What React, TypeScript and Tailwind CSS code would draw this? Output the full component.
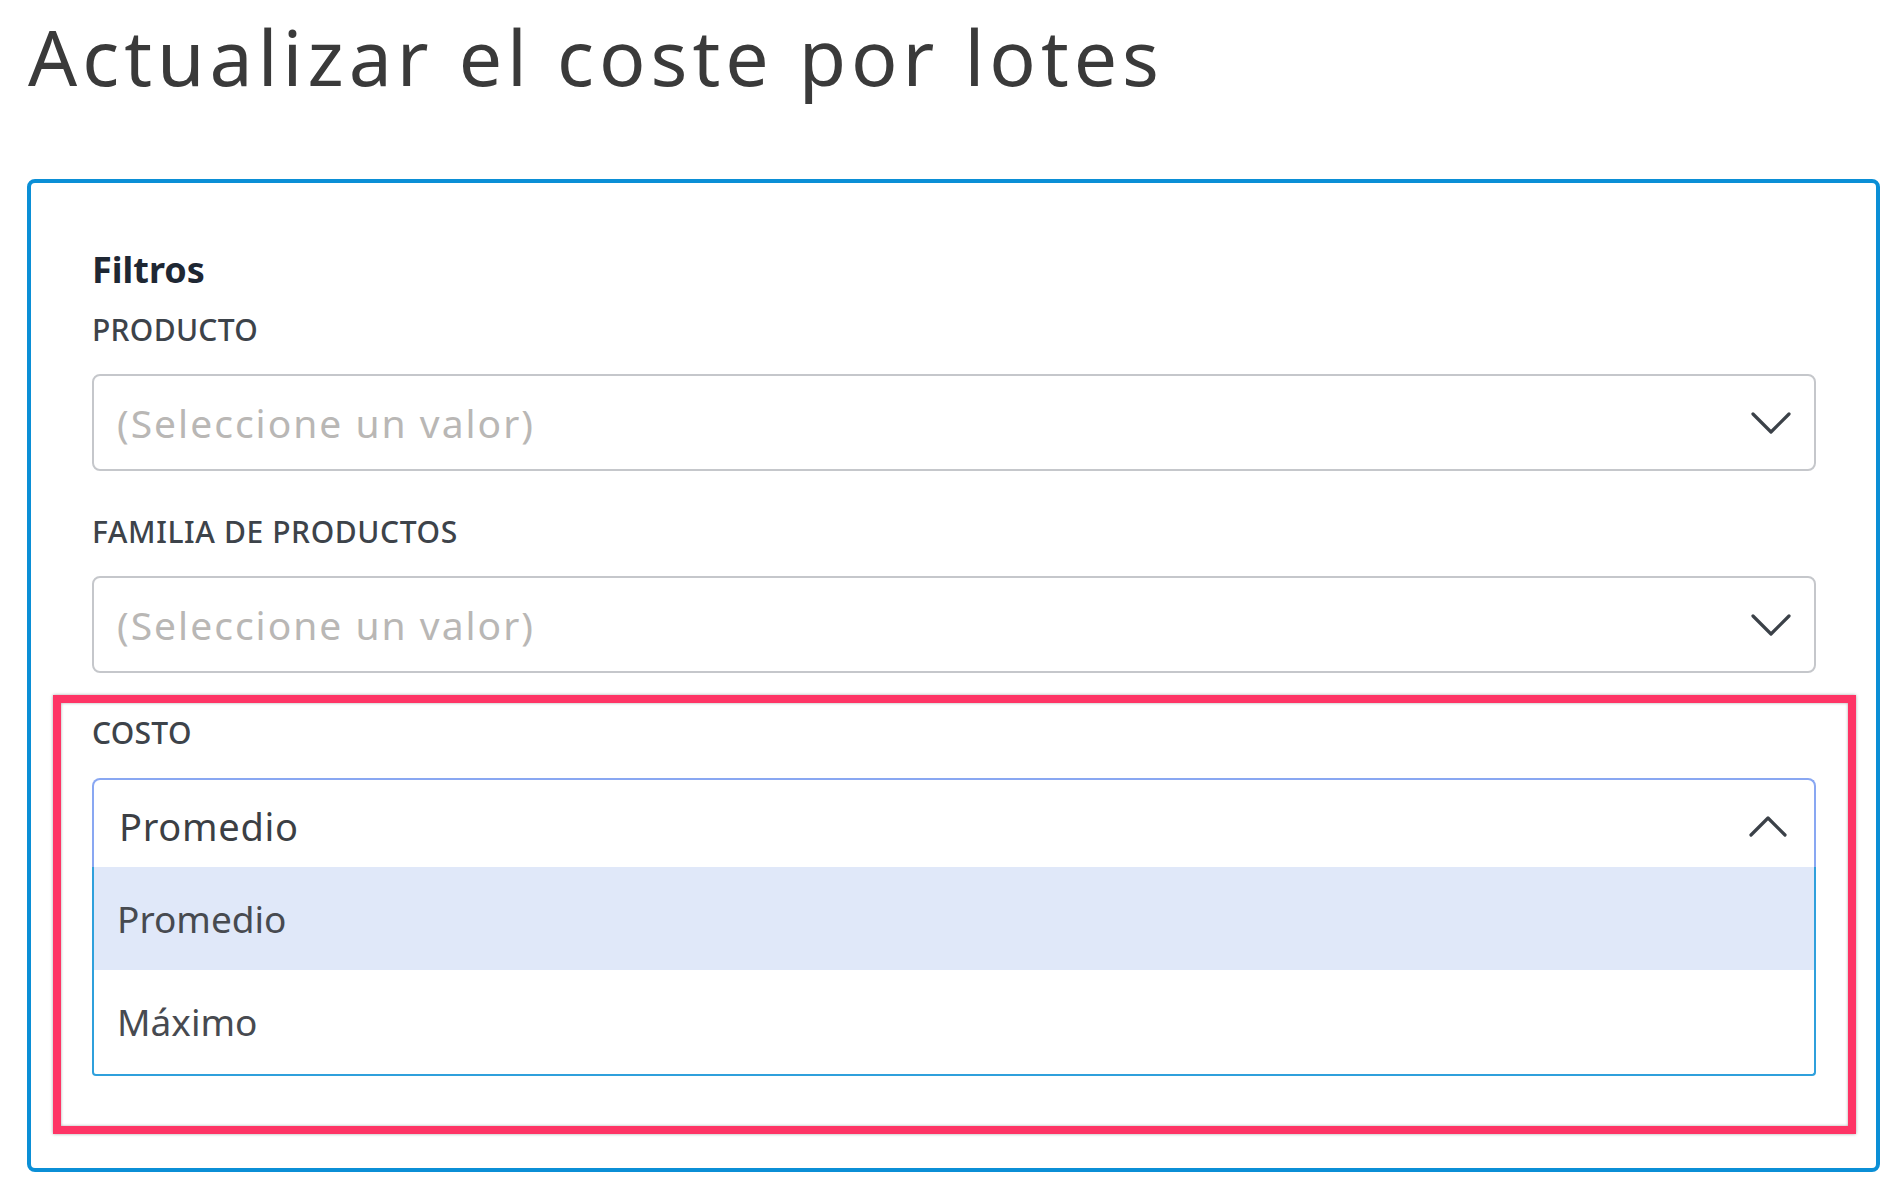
import React from "react";

function ChevronDown() {
  return (
    <svg width="40" height="24" viewBox="0 0 40 24" fill="none">
      <polyline points="2,3 20,21 38,3" stroke="#3b4148" strokeWidth="3.2" strokeLinecap="round" strokeLinejoin="round" />
    </svg>
  );
}

function ChevronUp() {
  return (
    <svg width="38" height="22" viewBox="0 0 38 22" fill="none">
      <polyline points="2,20 19,3 36,20" stroke="#3b4148" strokeWidth="3.2" strokeLinecap="round" strokeLinejoin="round" />
    </svg>
  );
}

function ClosedSelect() {
  return (
    <div className="mt-[24px] flex h-[97px] items-center justify-between rounded-[8px] border-2 border-[#c5c7cb] bg-white pl-[23px] pr-[23px]">
      <span className="text-[39px] leading-[48px] tracking-[2px] text-[#b9b7b5]">(Seleccione un valor)</span>
      <ChevronDown />
    </div>
  );
}

export default function App() {
  return (
    <div className="min-h-[1185px] bg-white pl-[27px] pr-[18px] pt-[17px] font-['Noto_Sans',sans-serif]">
      <h1 className="pl-[1px] text-[77px] font-normal leading-[80px] tracking-[5px] text-[#3a3a3a]">
        Actualizar el coste por lotes
      </h1>

      <div className="mt-[82px] rounded-[8px] border-4 border-[#0b8fd6] pl-[61px] pr-[60px] pt-[65px] pb-[34px]">
        <div className="text-[36px] font-bold leading-[44px] text-[#1e2733]">Filtros</div>

        <div className="mt-[18px] text-[30px] font-medium leading-[40px] tracking-[0.3px] text-[#3d434a]">PRODUCTO</div>
        <div className="mt-[1px]">
          <ClosedSelect />
        </div>

        <div className="mt-[41px] text-[30px] font-medium leading-[40px] tracking-[0.6px] text-[#3d434a]">FAMILIA DE PRODUCTOS</div>
        <ClosedSelect />

        <div className="-ml-[39px] -mr-[40px] mt-[22px] border-[8px] border-[#fe3465] pl-[31px] pr-[32px] pt-[10px] pb-[50px] shadow-[0_0_3px_rgba(0,0,0,0.35),inset_0_0_3px_rgba(0,0,0,0.35)]">
          <div className="text-[30px] font-medium leading-[40px] tracking-[0.3px] text-[#3d434a]">COSTO</div>

          <div className="mt-[25px]">
            <div className="flex h-[89px] items-center justify-between rounded-t-[8px] border-2 border-b-0 border-[#89a7f2] bg-white pl-[25px] pr-[27px] pt-[5px]">
              <span className="text-[38px] leading-[48px] tracking-[0.7px] text-[#3c3f44]">Promedio</span>
              <ChevronUp />
            </div>
            <div className="rounded-b-[4px] border-2 border-t-0 border-[#2fa0dc] bg-white">
              <div className="flex h-[103px] items-center bg-[#e0e8f9] pl-[23px]">
                <span className="text-[37px] leading-[48px] text-[#474a50]">Promedio</span>
              </div>
              <div className="flex h-[104px] items-center pl-[23px]">
                <span className="text-[37px] leading-[48px] text-[#474a50]">Máximo</span>
              </div>
            </div>
          </div>
        </div>
      </div>
    </div>
  );
}
